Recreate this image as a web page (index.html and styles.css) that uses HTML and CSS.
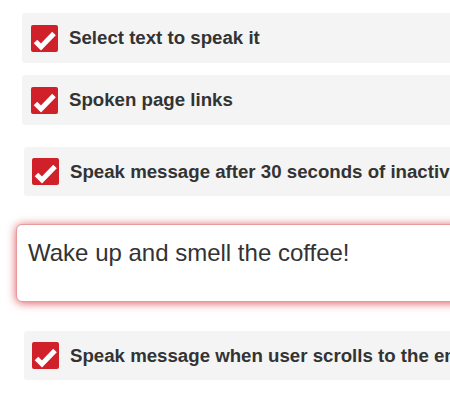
FILE: index.html
```html
<!DOCTYPE html>
<html>
<head>
<meta charset="utf-8">
<link rel="stylesheet" href="styles.css">
</head>
<body>
<div class="page">
  <label class="opt opt-a">
    <span class="box"><svg viewBox="0 0 27 27" width="27" height="27"><path d="M4.5 16.5 L10 22 L23 8.5" fill="none" stroke="#fff" stroke-width="5" stroke-linejoin="miter" stroke-linecap="butt"/></svg></span>
    <span class="lbl">Select text to speak it</span>
  </label>
  <label class="opt opt-b">
    <span class="box"><svg viewBox="0 0 27 27" width="27" height="27"><path d="M4.5 16.5 L10 22 L23 8.5" fill="none" stroke="#fff" stroke-width="5" stroke-linejoin="miter" stroke-linecap="butt"/></svg></span>
    <span class="lbl">Spoken page links</span>
  </label>
  <label class="opt opt-c">
    <span class="box"><svg viewBox="0 0 27 27" width="27" height="27"><path d="M4.5 16.5 L10 22 L23 8.5" fill="none" stroke="#fff" stroke-width="5" stroke-linejoin="miter" stroke-linecap="butt"/></svg></span>
    <span class="lbl">Speak message after 30 seconds of inactivity</span>
  </label>
  <div class="msg">Wake up and smell the coffee!</div>
  <label class="opt opt-d">
    <span class="box"><svg viewBox="0 0 27 27" width="27" height="27"><path d="M4.5 16.5 L10 22 L23 8.5" fill="none" stroke="#fff" stroke-width="5" stroke-linejoin="miter" stroke-linecap="butt"/></svg></span>
    <span class="lbl">Speak message when user scrolls to the end of the page</span>
  </label>
</div>
</body>
</html>
```
FILE: styles.css
```css
html, body {
  margin: 0;
  padding: 0;
  background: #fff;
  overflow: hidden;
}
.page {
  display: flex;
  flex-direction: column;
  padding-top: 13px;
  width: 700px;
  font-family: "Liberation Sans", Arial, sans-serif;
  color: #333;
}
.opt {
  display: flex;
  align-items: center;
  gap: 11px;
  height: 50px;
  background: #f4f4f4;
  border-radius: 3px;
  padding-left: 9px;
  box-sizing: border-box;
  white-space: nowrap;
}
.opt-a { margin-left: 22px; }
.opt-b { margin-left: 22px; margin-top: 12px; }
.opt-c { margin-left: 24px; margin-top: 22px; height: 49px; padding-left: 8px; }
.opt-d { margin-left: 24px; margin-top: 29px; height: 49px; padding-left: 8px; }
.box {
  width: 27px;
  height: 27px;
  background: #d0212a;
  border-radius: 2px;
  flex: none;
  display: block;
}
.box svg { display: block; }
.lbl {
  font-weight: bold;
  font-size: 18.67px;
}
.msg {
  margin-top: 28px;
  margin-left: 16px;
  height: 78px;
  box-sizing: border-box;
  border: 1px solid #e59a9e;
  border-radius: 6px;
  box-shadow: 0 1px 10px rgba(208, 33, 42, 0.75);
  background: #fff;
  padding: 14px 11px 12px;
  font-size: 24px;
  white-space: nowrap;
}
```
